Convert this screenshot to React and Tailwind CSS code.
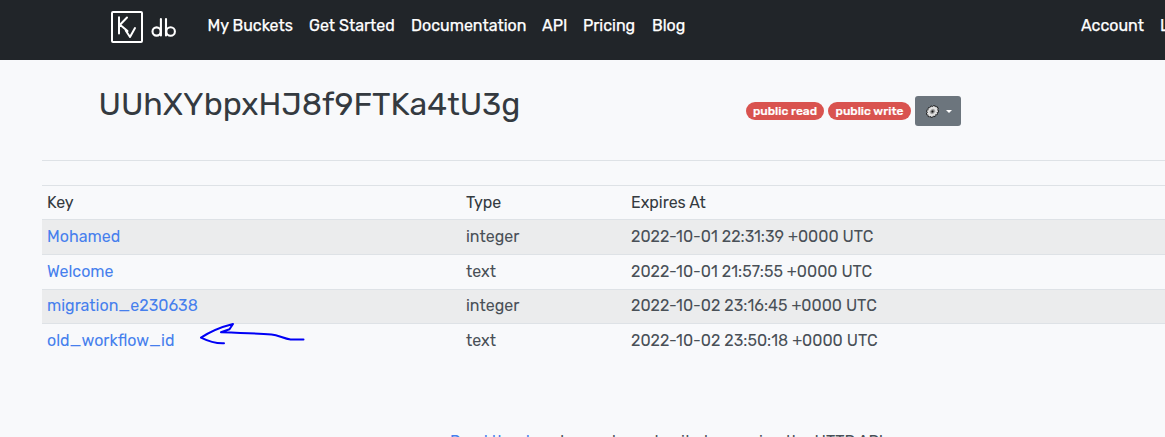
const leftNav = [
  ['My Buckets', 'w-[101.5px]'],
  ['Get Started', 'w-[102px]'],
  ['Documentation', 'w-[131px]'],
  ['API', 'w-[41px]'],
  ['Pricing', 'w-[69px]'],
  ['Blog', 'w-[50px]'],
];

const rows = [
  ['Mohamed', 'integer', '2022-10-01 22:31:39 +0000 UTC', 'h-[35px] pt-[5px] bg-[#ebeced]'],
  ['Welcome', 'text', '2022-10-01 21:57:55 +0000 UTC', 'h-[35px] pt-[5px]'],
  ['migration_e230638', 'integer', '2022-10-02 23:16:45 +0000 UTC', 'h-[34px] pt-[4px] bg-[#ebeced]'],
  ['old_workflow_id', 'text', '2022-10-02 23:50:18 +0000 UTC', 'h-[35px] pt-[5px]'],
];

function Logo() {
  return (
    <svg className="h-[34px] w-[68px] shrink-0" viewBox="0 0 68 34" fill="none" stroke="#fff" strokeWidth="2" strokeLinecap="round" strokeLinejoin="round">
      <rect x="2" y="2" width="30" height="30" rx="1" />
      <path d="M9 7.3v16.2M17 7.5L10 14.8l7.5 6.2M15.7 20.5l4.3 6.5l5-9" />
      <g strokeWidth="2.1">
        <circle cx="46.6" cy="21.5" r="4.1" />
        <path d="M50.9 9v16.5M56 9v16.5" />
        <circle cx="60.6" cy="21.5" r="4.3" />
      </g>
    </svg>
  );
}

function Gear() {
  return (
    <svg className="h-[15px] w-[15px]" viewBox="0 0 15 15" fill="none">
      <g transform="rotate(-40 7.5 7.5)">
        <ellipse cx="7.5" cy="7.5" rx="6.2" ry="5" fill="#2a2a2a" stroke="#202020" strokeWidth="1.5" strokeDasharray="2 1" />
        <ellipse cx="7.5" cy="7.5" rx="5.3" ry="4.1" fill="#e2e2e2" stroke="#e2e2e2" strokeWidth="1.4" strokeDasharray="1.6 0.9" />
        <ellipse cx="7.5" cy="7.5" rx="2.6" ry="2.1" fill="#888" stroke="#aaa" strokeWidth="0.6" />
        <circle cx="7.5" cy="7.5" r="1" fill="#111" />
      </g>
    </svg>
  );
}

function Badge({ children, width }) {
  return (
    <span className={`flex h-[18px] items-center justify-center rounded-full bg-[#d9534f] text-[12px] font-medium text-white [-webkit-text-stroke:0.2px_white] ${width}`}>
      {children}
    </span>
  );
}

export default function App() {
  return (
    <div className="h-[437px] w-[1165px] overflow-hidden whitespace-nowrap bg-[#f8f9fb] font-[Rubik,Roboto,sans-serif] text-[16px] leading-6 text-[#495057]">
      <header className="flex h-[60px] bg-[#212529] pl-[110px] text-white">
        <div className="pt-[10px]"><Logo /></div>
        <nav className="flex flex-1 pt-[14px] pl-[29.5px] [-webkit-text-stroke:0.25px_white]">
          {leftNav.map(([label, cls]) => (
            <a key={label} className={cls}>{label}</a>
          ))}
          <a className="ml-auto w-[79px] shrink-0">Account</a>
          <a className="w-[5px] shrink-0 overflow-hidden">Login</a>
        </nav>
      </header>

      <section className="ml-[42px] flex h-[101px] border-b border-[#dee2e6] pl-[56.5px]">
        <h1 className="w-[647.5px] pt-[24px] text-[32px] leading-[40px] text-[#343a40]">
          UUhXYbpxHJ8f9FTKa4tU3g
        </h1>
        <div className="mt-[36px] flex h-[30px] items-center">
          <Badge width="w-[78px]">public read</Badge>
          <Badge width="ml-[4px] w-[83px]">public write</Badge>
          <button className="ml-[4px] flex h-[30px] w-[46px] items-center rounded-[3px] bg-[#6c757d] pl-[10px]">
            <Gear />
            <svg className="ml-[6px] h-[3px] w-[6px]" viewBox="0 0 6 3"><path d="M0 0h6L3 3z" fill="#fff" /></svg>
          </button>
        </div>
      </section>

      <main className="relative mt-[24px] ml-[42px]">
        <div className="flex h-[34px] border-t border-[#dee2e6] pt-[5px] pl-[5px] text-[#343a40]">
          <span className="w-[419px]">Key</span>
          <span className="w-[165px]">Type</span>
          <span>Expires At</span>
        </div>
        {rows.map(([key, type, expires, cls]) => (
          <div key={key} className={`flex border-t border-[#dee2e6] pl-[5px] ${cls}`}>
            <a className="w-[419px] text-[#467fed]">{key}</a>
            <span className="w-[165px]">{type}</span>
            <span>{expires}</span>
          </div>
        ))}
        <svg className="absolute top-[130px] left-[148px] h-[40px] w-[125px]" viewBox="190 315 125 40" fill="none" stroke="#0000f5" strokeWidth="2" strokeLinecap="round" strokeLinejoin="round">
          <path d="M303.5 339.5h-13c-7-1-12-4.3-19-5c-14-1-28-1.5-50.5-2.2l8.5-3l3.5-5.3c-12 3-22 7-32 13.7c6 3 13 6 23 5.6" />
        </svg>
      </main>

      <p className="mt-[72px] pl-[450px]">
        <a className="text-[#467fed]">Read the docs</a> to create and write keys using the HTTP API
      </p>
    </div>
  );
}
